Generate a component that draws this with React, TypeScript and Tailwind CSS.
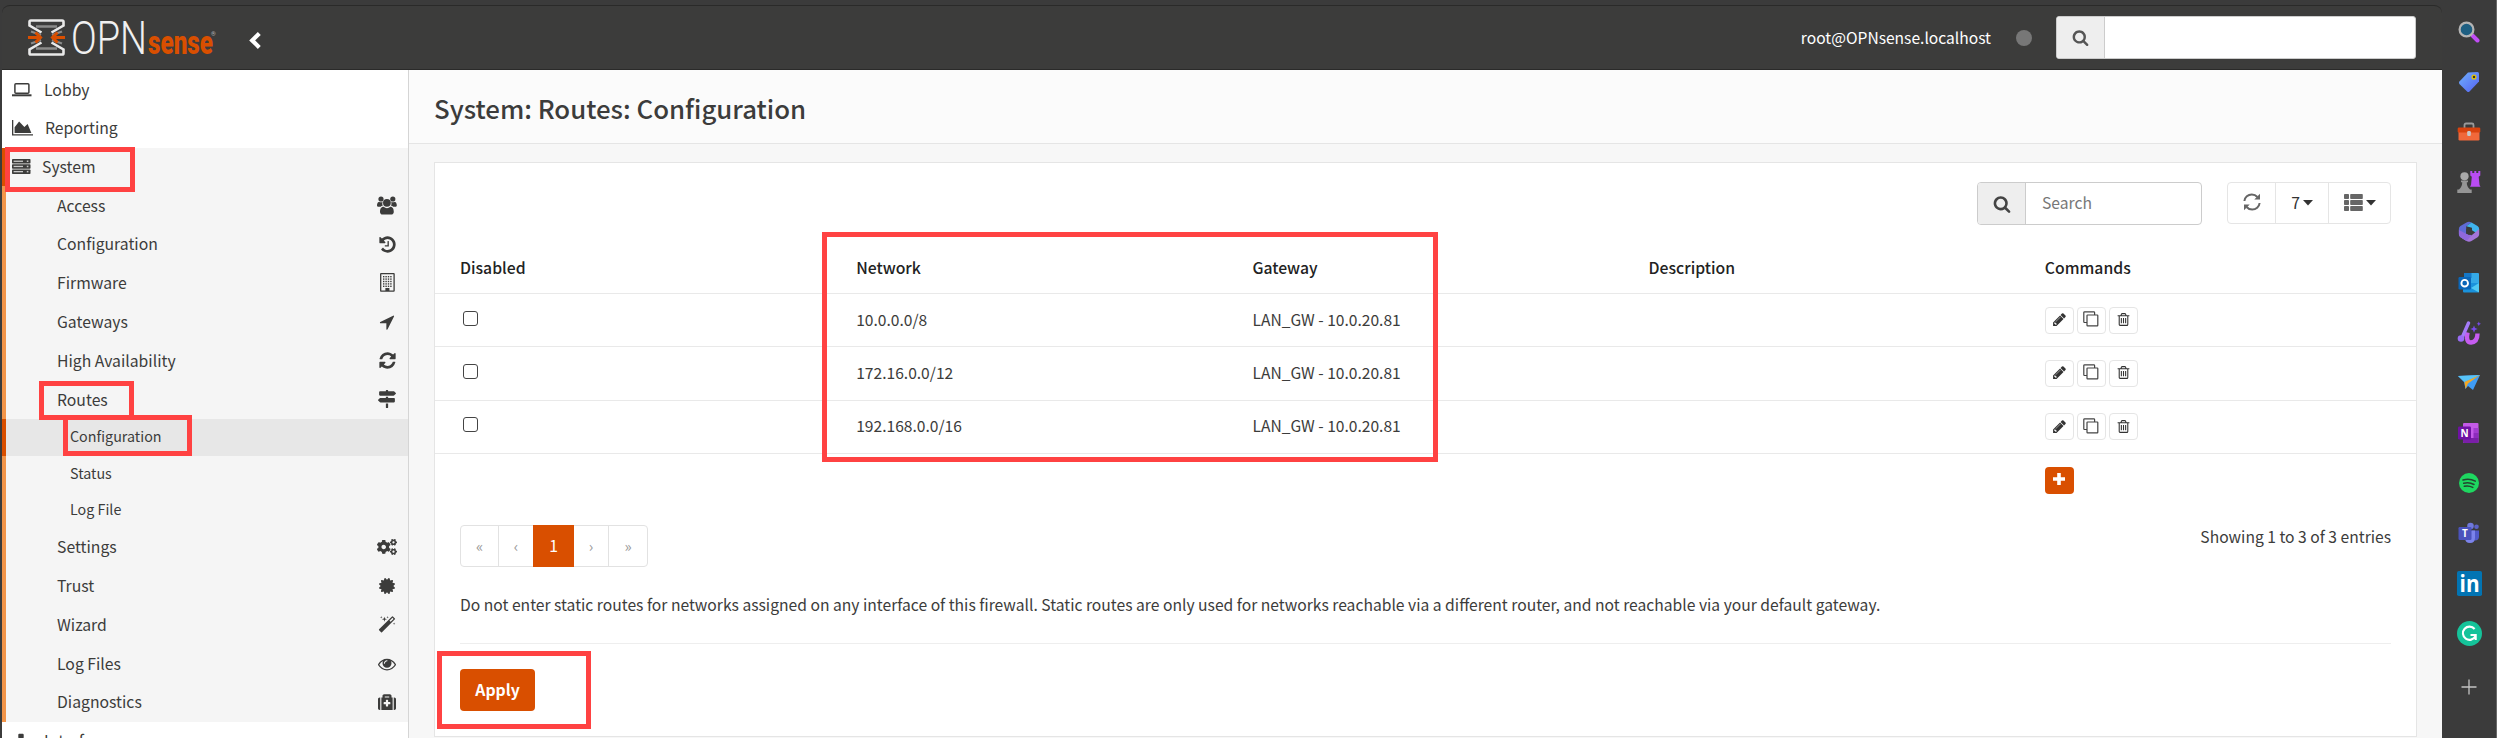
import React from "react";
import { FaCertificate, FaCogs, FaMapSigns, FaMedkit, FaSitemap } from "react-icons/fa";

const FA = {
  refresh:
    "M1639 1056q0 5-1 7-64 268-268 434.5t-478 166.5q-146 0-282.5-55t-243.5-157l-129 129q-19 19-45 19t-45-19-19-45v-448q0-26 19-45t45-19h448q26 0 45 19t19 45-19 45l-137 137q71 66 161 102t187 36q134 0 250-65t186-179q11-17 53-117 8-23 30-23h192q13 0 22.5 9.5t9.5 22.5zm25-800v448q0 26-19 45t-45 19h-448q-26 0-45-19t-19-45 19-45l138-138q-148-137-349-137-134 0-250 65t-186 179q-11 17-53 117-8 23-30 23h-199q-13 0-22.5-9.5t-9.5-22.5v-7q65-268 270-434.5t480-166.5q146 0 284 55.5t245 156.5l130-129q19-19 45-19t45 19 19 45z",
  history:
    "M1664 896q0 156-61 298t-164 245-245 164-298 61q-172 0-327-72.5t-264-204.5q-7-10-6.5-22.5t8.5-20.5l137-138q10-9 25-9 16 2 23 12 73 95 179 147t225 52q104 0 198.5-40.5t163.5-109.5 109.5-163.5 40.5-198.5-40.5-198.5-109.5-163.5-163.5-109.5-198.5-40.5q-98 0-188 35.5t-160 101.5l137 138q31 30 14 69-17 40-59 40h-448q-26 0-45-19t-19-45v-448q0-42 40-59 39-17 69 14l130 129q107-101 244.5-156.5t284.5-55.5q156 0 298 61t245 164 164 245 61 298zm-640-288v448q0 14-9 23t-23 9h-320q-14 0-23-9t-9-23v-64q0-14 9-23t23-9h224v-352q0-14 9-23t23-9h64q14 0 23 9t9 23z",
  arrow:
    "M1593 349l-640 1280q-17 35-57 35-5 0-15-2-22-5-35.5-22.5t-13.5-39.5v-576h-576q-22 0-39.5-13.5t-22.5-35.5 4-42 29-30l1280-640q13-7 29-7 27 0 45 19 15 14 18.5 34.5t-6.5 39.5z",
  magic:
    "M1254 581l293-293-107-107-293 293zm447-293q0 27-18 45l-1286 1286q-18 18-45 18t-45-18l-198-198q-18-18-18-45t18-45l1286-1286q18-18 45-18t45 18l198 198q18 18 18 45zm-1351-190l98 30-98 30-30 98-30-98-98-30 98-30 30-98zm350 162l196 60-196 60-60 196-60-196-196-60 196-60 60-196zm930 478l98 30-98 30-30 98-30-98-98-30 98-30 30-98zm-640-640l98 30-98 30-30 98-30-98-98-30 98-30 30-98z",
  pencil:
    "M491 1536l91-91-235-235-91 91v107h128v128h107zm523-928q0-22-22-22-10 0-17 7l-542 542q-7 7-7 17 0 22 22 22 10 0 17-7l542-542q7-7 7-17zm-54-192l416 416-832 832h-416v-416zm683 96q0 53-37 90l-166 166-416-416 166-165q36-38 90-38 53 0 91 38l235 234q37 39 37 91z",
  trash:
    "M704 736v576q0 14-9 23t-23 9h-64q-14 0-23-9t-9-23v-576q0-14 9-23t23-9h64q14 0 23 9t9 23zm256 0v576q0 14-9 23t-23 9h-64q-14 0-23-9t-9-23v-576q0-14 9-23t23-9h64q14 0 23 9t9 23zm256 0v576q0 14-9 23t-23 9h-64q-14 0-23-9t-9-23v-576q0-14 9-23t23-9h64q14 0 23 9t9 23zm128 724v-948h-896v948q0 22 7 40.5t14.5 27 10.5 8.5h832q3 0 10.5-8.5t14.5-27 7-40.5zm-672-1076h448l-48-117q-7-9-17-11h-317q-10 2-17 11zm928 32v64q0 14-9 23t-23 9h-96v948q0 83-47 143.5t-113 60.5h-832q-66 0-113-58.5t-47-141.5v-952h-96q-14 0-23-9t-9-23v-64q0-14 9-23t23-9h309l70-167q15-37 54-63t79-26h320q40 0 79 26t54 63l70 167h309q14 0 23 9t9 23z",
  search:
    "M1216 832q0-185-131.5-316.5t-316.5-131.5-316.5 131.5-131.5 316.5 131.5 316.5 316.5 131.5 316.5-131.5 131.5-316.5zm512 832q0 52-38 90t-90 38q-54 0-90-38l-343-342q-179 124-399 124-143 0-273.5-55.5t-225-150-150-225-55.5-273.5 55.5-273.5 150-225 225-150 273.5-55.5 273.5 55.5 225 150 150 225 55.5 273.5q0 220-124 399l343 343q37 37 37 90z",
  eye:
    "M1664 960q-152-236-381-353 61 104 61 225 0 185-131.5 316.5t-316.5 131.5-316.5-131.5-131.5-316.5q0-121 61-225-229 117-381 353 133 205 333.5 326.5t434.5 121.5 434.5-121.5 333.5-326.5zm-720-384q0-20-14-34t-34-14q-125 0-214.5 89.5t-89.5 214.5q0 20 14 34t34 14 34-14 14-34q0-86 61-147t147-61q20 0 34-14t14-34zm848 384q0 34-20 69-140 230-376.5 368.5t-499.5 138.5-499.5-139-376.5-368q-20-35-20-69t20-69q140-229 376.5-368t499.5-139 499.5 139 376.5 368q20 35 20 69z",
};

function Fa({ d, className }: { d: string; className: string }) {
  return (
    <svg viewBox="0 0 1792 1792" fill="currentColor" className={className}>
      <path d={d} />
    </svg>
  );
}

function Laptop() {
  return (
    <svg width="20" height="14" viewBox="0 0 20 14" fill="none" stroke="currentColor">
      <rect x="2.9" y="0.8" width="14" height="9.4" rx="1" strokeWidth="1.5" />
      <path d="M0 12.3h19.5" strokeWidth="2" />
    </svg>
  );
}

function AreaChart() {
  return (
    <svg width="21" height="16" viewBox="0 0 21 16" fill="currentColor">
      <path d="M0 0h1.3v14.2H21v1.4H0z" />
      <path d="M2.6 13V7.2L7.1 1.4l5.3 5.6 3.2-3L19.4 13z" />
    </svg>
  );
}

function Server() {
  return (
    <svg width="19" height="16" viewBox="0 0 19 16" fill="currentColor">
      {[0, 5.2, 10.4].map((y) => (
        <g key={y}>
          <rect x="0" y={y} width="18.5" height="4.6" rx="0.8" />
          <rect x="1.6" y={y + 1.6} width="9.4" height="1.3" fill="#c9c9c9" />
          <rect x="14.8" y={y + 1.5} width="1.6" height="1.5" fill="#c9c9c9" />
        </g>
      ))}
    </svg>
  );
}

function Users() {
  return (
    <svg width="20" height="19" viewBox="0 0 20 19" fill="currentColor">
      <circle cx="4" cy="3" r="2.6" />
      <circle cx="15.8" cy="3" r="2.6" />
      <path d="M5.8 6.2C4 6.6 2.4 5.6 1.6 6 .4 6.6 0 8 0 9.5c0 1 .7 1.3 1.7 1.300h1.900c.5-.6 1.300-1 2.300-1.200-.8-1.100-.8-2.300-.1-3.400z" />
      <path d="M14 6.200c1.800.4 3.400-.6 4.200-.2 1.200.6 1.600 2 1.600 3.500 0 1-.7 1.300-1.700 1.300h-1.900c-.5-.6-1.300-1-2.300-1.200.8-1.100.8-2.300.1-3.400z" />
      <circle cx="9.9" cy="6.8" r="3.9" />
      <path d="M6.600 10.700c2 1.900 4.800 1.900 6.700 0 2.600 0 3.500 2.500 3.500 5.100 0 1.900-1.100 2.800-2.600 2.800H5.600C4 18.600 3 17.700 3 15.800c0-2.600.9-5.100 3.600-5.100z" />
    </svg>
  );
}

function Building() {
  return (
    <svg width="15" height="19" viewBox="0 0 15 19" fill="currentColor">
      <rect x="0.7" y="0.7" width="13.4" height="17.4" rx="0.4" fill="none" stroke="currentColor" strokeWidth="1.3" />
      {[3, 5.4, 7.8, 10.2, 12.6].map((y) =>
        [3, 5.4, 7.8, 10.2].map((x) => <rect key={`${x}-${y}`} x={x} y={y} width="1.4" height="1.4" />),
      )}
      <rect x="5.4" y="15" width="4" height="3" />
    </svg>
  );
}

const navText = "text-[15.75px]";

function Logo() {
  return (
    <svg width="190" height="60" viewBox="0 -10 190 60" aria-label="OPNsense" className="shrink-0">
      <g transform="translate(1 1)">
        <g fill="none" stroke="#8b8b8a" strokeWidth="2.6">
          <path d="M8 7.5h21M8 29.500h21" />
          <path d="M3 12.500l10 3.500M34 12.500L24 16M3 24.500L13 21M34 24.500L24 21" strokeWidth="2.200" />
        </g>
        <g fill="none" stroke="#e9e9e9" strokeWidth="2.600">
          <path d="M13.500 13.500L1.500 6.500V2.800q0-1.300 1.300-1.300h31.400q1.300 0 1.300 1.300v3.700l-12 7" />
          <path d="M13.500 23.500l-12 7v3.700q0 1.300 1.300 1.300h31.400q1.300 0 1.300-1.300v-3.700l-12-7" />
        </g>
        <g stroke="#d94f00" strokeWidth="3.200" fill="none">
          <path d="M0 18.500h11M37 18.500H26" />
          <path d="M7.500 13.500l5 5-5 5M29.500 13.500l-5 5 5 5" strokeWidth="3" />
        </g>
      </g>
      <text x="44" y="35.500" fontSize="46" textLength="76" lengthAdjust="spacingAndGlyphs" fill="#f0f0f0" className="font-['Roboto',sans-serif] font-light">
        OPN
      </text>
      <text x="121" y="35.500" fontSize="34" textLength="65" lengthAdjust="spacingAndGlyphs" fill="#d94f00" className="font-['Roboto',sans-serif] font-black">
        sense
      </text>
      <text x="184" y="18" fontSize="6" fill="#b5b5b5" className="font-['Roboto',sans-serif]">
        ®
      </text>
    </svg>
  );
}

function Header() {
  return (
    <header className="flex h-[65px] shrink-0 items-center rounded-t-[8px] border-b border-t border-[#2a2a29] bg-[#3c3c3b] pl-[25px] pr-[26px] text-white">
      <Logo />
      <svg width="12" height="17" viewBox="0 0 12 17" className="ml-[32px] mt-[6px]" fill="none" stroke="#fff" strokeWidth="4.2">
        <path d="M10.3 1.5L3.2 8.4l7.1 7" />
      </svg>
      <div className="ml-auto whitespace-nowrap text-[15.6px]">root@OPNsense.localhost</div>
      <div className="ml-[25px] size-4 rounded-full bg-[#777]" />
      <div className="ml-6 flex h-[43px] w-[360px] overflow-hidden rounded-[3px] border border-[#ccc] bg-white">
        <div className="flex w-[48px] items-center justify-center border-r border-[#ccc] bg-[#eee] text-[#555]">
          <Fa d={FA.search} className="size-[17px]" />
        </div>
      </div>
    </header>
  );
}

function SubItem({ label, icon }: { label: string; icon: React.ReactNode }) {
  return (
    <div className={`flex h-[38.8px] items-center pl-[51px] ${navText}`}>
      <span>{label}</span>
      <span className="ml-auto mr-[10px] flex w-[22px] justify-center">{icon}</span>
    </div>
  );
}

const leaf = "flex items-center pb-[2px] text-[14.3px]";

function Sidebar() {
  return (
    <nav className="h-full w-[407px] shrink-0 overflow-hidden border-r border-[#d5d5d5] bg-white">
      <div className={`flex h-[39px] items-center pl-[10px] ${navText}`}>
        <Laptop />
        <span className="ml-[12px]">Lobby</span>
      </div>
      <div className={`flex h-[39px] items-center pb-[2px] pl-[10px] ${navText}`}>
        <AreaChart />
        <span className="ml-[12px]">Reporting</span>
      </div>
      <div className={`flex h-[38px] items-center border-l-4 border-[#d94f00] bg-[#f5f5f5] pb-[1px] pl-[6px] ${navText}`}>
        <Server />
        <span className="ml-[11px]">System</span>
      </div>
      <div className="border-l-4 border-[#f2954a] bg-[#f5f5f5]">
        <SubItem label="Access" icon={<Users />} />
        <SubItem label="Configuration" icon={<Fa d={FA.history} className="size-[19px]" />} />
        <SubItem label="Firmware" icon={<Building />} />
        <SubItem label="Gateways" icon={<Fa d={FA.arrow} className="size-[18px]" />} />
        <SubItem label="High Availability" icon={<Fa d={FA.refresh} className="size-[19px]" />} />
        <SubItem label="Routes" icon={<FaMapSigns size={18} />} />
        <div className={`-ml-1 h-[37px] border-l-4 border-[#d94f00] bg-[#e7e7e7] pl-[64px] ${leaf}`}>Configuration</div>
        <div className={`h-[36px] pl-[64px] ${leaf}`}>Status</div>
        <div className={`h-[36px] pl-[64px] ${leaf}`}>Log File</div>
        <SubItem label="Settings" icon={<FaCogs size={20} />} />
        <SubItem label="Trust" icon={<FaCertificate size={16} />} />
        <SubItem label="Wizard" icon={<Fa d={FA.magic} className="size-[18px]" />} />
        <SubItem label="Log Files" icon={<Fa d={FA.eye} className="size-[18px]" />} />
        <SubItem label="Diagnostics" icon={<FaMedkit size={18} />} />
      </div>
      <div className={`flex h-[39px] items-center pl-[10px] ${navText}`}>
        <FaSitemap size={18} />
        <span className="ml-[14px]">Interfaces</span>
      </div>
    </nav>
  );
}

function Caret() {
  return (
    <svg width="10" height="6" viewBox="0 0 10 6" fill="#333">
      <path d="M0 0h10L5 5.500z" />
    </svg>
  );
}

function Toolbar() {
  return (
    <div className="flex h-[43px] justify-end px-[25px] text-[15.7px]">
      <div className="flex w-[225px] overflow-hidden rounded-[4px] border border-[#ccc]">
        <div className="flex w-[48px] items-center justify-center border-r border-[#ccc] bg-[#eee] text-[#444]">
          <Fa d={FA.search} className="size-[18px]" />
        </div>
        <div className="flex items-center pb-[1px] pl-[16px] text-[#777]">Search</div>
      </div>
      <div className="ml-[25px] flex h-[42px] w-[164px] rounded-[4px] border border-[#e5e5e5] text-[#333]">
        <div className="flex w-[48px] items-center justify-center border-r border-[#e5e5e5]">
          <svg width="18" height="18" viewBox="0 0 18 18" fill="none" stroke="#666" strokeWidth="2" className="-mt-[2px]">
            <path d="M1.4 8C1.8 4.2 5 1.4 8.8 1.400c2.200 0 4.200 1 5.600 2.600M16.600 10c-.4 3.800-3.600 6.600-7.400 6.600-2.200 0-4.200-1-5.600-2.600" />
            <path d="M17 .8v5.700h-5.700zM1 17.200v-5.700h5.700z" fill="#666" stroke="none" />
          </svg>
        </div>
        <div className="flex w-[53px] items-center justify-center gap-[3px] border-r border-[#e5e5e5]">
          7<Caret />
        </div>
        <div className="flex flex-1 items-center justify-center gap-[3px]">
          <svg width="19" height="17" viewBox="0 0 19 17" fill="#666" className="-mt-[2px]">
            {[0, 6, 12].map((y) => (
              <g key={y}>
                <rect x="0" y={y} width="5" height="5" rx="0.8" />
                <rect x="6.2" y={y} width="12.6" height="5" rx="0.8" />
              </g>
            ))}
          </svg>
          <Caret />
        </div>
      </div>
    </div>
  );
}

const cmd = "flex h-[27px] w-[29px] items-center justify-center rounded-[4px] border border-[#e5e5e5] text-[#333]";

function Commands() {
  return (
    <div className="flex gap-[3px]">
      <div className={cmd}>
        <Fa d={FA.pencil} className="-mt-[1px] size-[15px]" />
      </div>
      <div className={cmd}>
        <svg width="16" height="16" viewBox="0 0 16 16" fill="none" stroke="#444" strokeWidth="1.2" className="-mt-[2px]">
          <rect x="4" y="4" width="10.8" height="10.8" rx="0.6" />
          <path d="M4 11.500H1.600a.8.800 0 0 1-.8-.8V1.600a.8.800 0 0 1 .8-.8h9.200a.8.800 0 0 1 .8.800V4" />
        </svg>
      </div>
      <div className={cmd}>
        <Fa d={FA.trash} className="-mt-[1px] size-[15px]" />
      </div>
    </div>
  );
}

const routes = [
  { network: "10.0.0.0/8", gateway: "LAN_GW - 10.0.20.81" },
  { network: "172.16.0.0/12", gateway: "LAN_GW - 10.0.20.81" },
  { network: "192.168.0.0/16", gateway: "LAN_GW - 10.0.20.81" },
];

function RouteTable() {
  return (
    <div className="mt-[17px]">
      <div className="grid h-[52px] grid-cols-5 items-center border-b border-[#e9e9e9] text-[15.75px] font-medium text-[#222]">
        {["Disabled", "Network", "Gateway", "Description", "Commands"].map((h) => (
          <div key={h} className="pl-[25px]">
            {h}
          </div>
        ))}
      </div>
      {routes.map((r) => (
        <div key={r.network} className="grid h-[53.3px] grid-cols-5 items-center border-b border-[#e9e9e9] text-[15.6px]">
          <div className="pl-[28px]">
            <div className="-mt-[4px] size-[15px] rounded-[3px] border-[1.5px] border-[#444] bg-white" />
          </div>
          <div className="pb-[1px] pl-[25px]">{r.network}</div>
          <div className="pb-[1px] pl-[25px]">{r.gateway}</div>
          <div />
          <div className="pl-[25px]">
            <Commands />
          </div>
        </div>
      ))}
      <div className="grid grid-cols-5 pt-[13px]">
        <div className="col-start-5 pl-[25px]">
          <div className="flex h-[27px] w-[29px] items-center justify-center rounded-[4px] bg-[#d94f00]">
            <svg width="12" height="12" viewBox="0 0 12 12" stroke="#fff" strokeWidth="3.6" className="-mt-[2px]">
              <path d="M6 0v12M0 6h12" />
            </svg>
          </div>
        </div>
      </div>
    </div>
  );
}

function Pager() {
  return (
    <div className="mt-[31px] flex items-start justify-between px-[25px]">
      <div className="flex h-[42px] rounded-[4px] border border-[#e2e2e2] text-[15px] text-[#999]">
        <div className="flex w-[38px] items-center justify-center border-r border-[#e2e2e2]">«</div>
        <div className="flex w-[34px] items-center justify-center">‹</div>
        <div className="-my-px flex w-[41px] items-center justify-center bg-[#d94f00] text-[15.75px] text-white">1</div>
        <div className="flex w-[35px] items-center justify-center border-r border-[#e2e2e2]">›</div>
        <div className="flex w-[38px] items-center justify-center">»</div>
      </div>
      <div className="text-[15.65px] leading-[24px]">Showing 1 to 3 of 3 entries</div>
    </div>
  );
}

function Content() {
  return (
    <main className="flex min-w-0 flex-1 flex-col bg-[#f7f7f7]">
      <div className="flex h-[74px] shrink-0 items-center border-b border-[#e5e5e5] bg-[#fbfbfb] pl-[25px] text-[25.8px] font-medium">
        <h1 className="pt-[3px]">System: Routes: Configuration</h1>
      </div>
      <section className="mx-[25px] mt-[18px] h-[575px] border border-[#e5e5e5] bg-white pt-[19px]">
        <Toolbar />
        <RouteTable />
        <Pager />
        <p className="mt-[26px] whitespace-nowrap px-[25px] text-[15.66px] leading-[24px]">
          Do not enter static routes for networks assigned on any interface of this firewall. Static routes are only used for networks reachable via a different router, and not reachable via your default gateway.
        </p>
        <div className="mx-[25px] mt-[26px] border-t border-[#eee] pt-[25px]">
          <div className="flex h-[42px] w-[75px] items-center justify-center rounded-[4px] bg-[#d94f00] text-[15.75px] font-bold text-white">Apply</div>
        </div>
      </section>
    </main>
  );
}

const dockIcons: React.ReactNode[] = [
  <svg width="22" height="22" viewBox="0 0 22 22">
    <path d="M14.500 14.500l5 5" stroke="#c04df5" strokeWidth="4" strokeLinecap="round" />
    <circle cx="8.5" cy="8.5" r="6.9" fill="#1e5f82" stroke="#b4b4b4" strokeWidth="2.2" />
  </svg>,
  <svg width="22" height="22" viewBox="0 0 22 22">
    <defs>
      <linearGradient id="tag" x1="0" y1="0" x2="1" y2="1">
        <stop stopColor="#6fb1fb" />
        <stop offset="1" stopColor="#5560f2" />
      </linearGradient>
    </defs>
    <path d="M10 1.500L19.500 1q1.500 0 1.500 1.500v8L11.500 20.600q-1.200 1-2.400 0L1.400 13q-.9-1.200 0-2.400z" fill="url(#tag)" />
    <circle cx="16" cy="6" r="1.9" fill="#333" stroke="#e8c500" strokeWidth="1.3" />
  </svg>,
  <svg width="24" height="20" viewBox="0 0 24 20">
    <path d="M7.500 6V3q0-1.500 1.500-1.500h6q1.500 0 1.500 1.500v3" fill="none" stroke="#9a9a9a" strokeWidth="1.8" />
    <rect x="1.5" y="8" width="21" height="10.5" rx="1.2" fill="#f0683a" />
    <rect x="0.7" y="5.5" width="22.6" height="5" rx="1.2" fill="#d8430f" />
    <rect x="10.2" y="9" width="3.6" height="5" rx="1.2" fill="#c8c8c8" />
  </svg>,
  <svg width="24" height="24" viewBox="0 0 24 24">
    <path d="M13.300 1h2v2h2V1h2v2h2V1h2v4.500l-1.600 1.300.8 8.200 1 1.700H13l1-1.700.8-8.200-1.500-1.300z" fill="#b94cf2" />
    <circle cx="7.5" cy="6.3" r="4.1" fill="#a9a9a9" />
    <path d="M4 10.500h7v1.700H9.800c0 3 .6 4.700 3.200 7.300h1.700V23H.3v-3.500H2c2.600-2.600 3.200-4.300 3.200-7.300H4z" fill="#959595" />
  </svg>,
  <svg width="22" height="22" viewBox="0 0 22 22">
    <path d="M8.500 1.400q2.500-1.400 5 0L8.200 5.300v8.900L7 18.800l-4.500-2.600Q.9 15 .9 13V7.800q0-1.700 1.500-2.800z" fill="#5f6ad6" />
    <path d="M13.500 1.400l6 3.600q1.600 1 1.600 2.800v5.900L14 9.200V6.800L8.200 5.300z" fill="#3fb4ee" />
    <path d="M21.100 8v5.600q0 1.800-1.500 2.700l-6.100 3.800q-2.500 1.400-5 0L4 17.300l9.700-3.100z" fill="#a475d8" />
    <path d="M.9 9v4.500q0 1.600 1.500 2.700L8.500 20l5.200-5.800-5.500-1.500z" fill="#9068dc" />
    <path d="M8.200 8.200L11 6.600l2.900 1.600v4L11 14l-2.800-1.800z" fill="#3b3b3b" />
  </svg>,
  <svg width="22" height="22" viewBox="0 0 22 22">
    <rect x="6" y="1" width="15" height="13" rx="1" fill="#35a9e6" />
    <path d="M6 1h7.500v5H6z" fill="#1578c8" />
    <path d="M5 11h16v8.500q0 1-1 1H6q-1 0-1-1z" fill="#1a92dc" />
    <path d="M21 11l-8 5 8 4.500z" fill="#50c8f2" />
    <rect x="0.5" y="5" width="12.5" height="12.5" rx="1.2" fill="#0b66b8" />
    <circle cx="6.7" cy="11.2" r="3.3" fill="none" stroke="#fff" strokeWidth="1.9" />
  </svg>,
  <svg width="24" height="24" viewBox="0 0 24 24">
    <path d="M10.500 11.500Q8.500 21.500 14 21.500q6.500-.5 6.500-9" fill="none" stroke="#c65cf0" strokeWidth="4.4" />
    <path d="M11.500 2L4.500 18" stroke="#a57cf8" strokeWidth="3.4" strokeLinecap="round" />
    <circle cx="4" cy="17.5" r="3.3" fill="#9a6cf5" />
    <path d="M17 4.500l1 2.500 2.700 1-2.700 1-1 2.700-1-2.700-2.700-1 2.700-1zM21.800.5l.7 1.700 1.500.6-1.500.6-.7 1.700-.7-1.700-1.500-.6 1.500-.6z" fill="#7a4bf0" />
  </svg>,
  <svg width="22" height="17" viewBox="0 0 22 17">
    <path d="M0 2L22 1 15 16l-5-4-2.500 3L6 8z" fill="#3f9cf5" />
    <path d="M0 2L22 1 6.500 8z" fill="#58c4f8" />
    <path d="M22 1L6.500 8l1 7L10 9.500z" fill="#f5a823" />
  </svg>,
  <svg width="22" height="22" viewBox="0 0 22 22">
    <rect x="5" y="1" width="15.5" height="20" rx="1" fill="#c45be8" />
    <path d="M15.500 6h5v5h-5z" fill="#a33bd0" />
    <path d="M15.500 11h5v5h-5z" fill="#8d2bbd" />
    <path d="M5 16h15.500v4q0 1-1 1H6q-1 0-1-1z" fill="#7a1fa8" />
    <rect x="0" y="4.5" width="13" height="13" rx="1.2" fill="#6f12a3" />
    <text x="6.5" y="14.5" fontSize="10" textAnchor="middle" fill="#fff" className="font-['Open_Sans',sans-serif] font-bold">
      N
    </text>
  </svg>,
  <svg width="20" height="20" viewBox="0 0 20 20">
    <circle cx="10" cy="10" r="10" fill="#1ed760" />
    <path d="M4 7q6.500-2 12.300 1.200M4.700 10.300q5.500-1.500 10.300 1.200M5.300 13.300q4.500-1 8.500 1.100" fill="none" stroke="#24442f" strokeWidth="1.5" strokeLinecap="round" />
  </svg>,
  <svg width="22" height="22" viewBox="0 0 22 22">
    <circle cx="12.5" cy="4" r="3.3" fill="#6f78dc" />
    <circle cx="18.5" cy="4.7" r="2.3" fill="#5b62c8" />
    <path d="M14 8.500h7v6q0 4-4 4h-3z" fill="#5059c9" />
    <path d="M7 8.500h10v7q0 5.500-5 5.500t-5-5z" fill="#7b83eb" />
    <rect x="0.5" y="5" width="13" height="13" rx="1.2" fill="#4b53bc" />
    <text x="7" y="15" fontSize="10" textAnchor="middle" fill="#fff" className="font-['Open_Sans',sans-serif] font-bold">
      T
    </text>
  </svg>,
  <svg width="25" height="25" viewBox="0 0 25 25">
    <rect width="25" height="25" rx="1.8" fill="#0274b3" />
    <text x="12.6" y="21.3" fontSize="24" textLength="20" lengthAdjust="spacingAndGlyphs" textAnchor="middle" fill="#fff" className="font-['Open_Sans',sans-serif] font-bold">
      in
    </text>
  </svg>,
  <svg width="25" height="25" viewBox="0 0 25 25">
    <circle cx="12.5" cy="12.5" r="12.5" fill="#15c39a" />
    <path d="M17.600 8A6.600 6.600 0 1 0 18.400 15.200M13.500 14h5.200v5" fill="none" stroke="#fff" strokeWidth="2.1" />
  </svg>,
];

function Dock() {
  return (
    <aside className="flex w-[55px] shrink-0 flex-col items-center border-r border-[#6a6a6a] bg-[#3b3b3b] pt-[7px]">
      {dockIcons.map((icon, i) => (
        <div key={i} className="flex h-[50.1px] shrink-0 items-center">
          {icon}
        </div>
      ))}
      <svg width="16" height="16" viewBox="0 0 16 16" stroke="#c4c4c4" strokeWidth="1.3" className="mt-[21px] shrink-0">
        <path d="M8 .5v15M.5 8h15" />
      </svg>
    </aside>
  );
}

function Highlight({ className }: { className: string }) {
  return <div className={`pointer-events-none absolute border-[5px] border-[#ff4242] ${className}`} />;
}

export default function App() {
  return (
    <div className="relative flex h-[738px] w-[2497px] overflow-hidden bg-[#3b3b3b] font-['Noto_Sans_CJK_SC',sans-serif] leading-none text-[#3c3c3b]">
      <div className="flex min-w-0 flex-1 flex-col pl-[2px] pt-[5px]">
        <Header />
        <div className="flex h-[668px] shrink-0">
          <Sidebar />
          <Content />
        </div>
      </div>
      <Dock />
      <Highlight className="left-[5px] top-[147px] h-[45px] w-[130px]" />
      <Highlight className="left-[39px] top-[381px] h-[39px] w-[95px]" />
      <Highlight className="left-[63px] top-[415px] h-[41px] w-[129px]" />
      <Highlight className="left-[822px] top-[232px] h-[230px] w-[616px]" />
      <Highlight className="left-[437px] top-[651px] h-[78px] w-[154px]" />
    </div>
  );
}
